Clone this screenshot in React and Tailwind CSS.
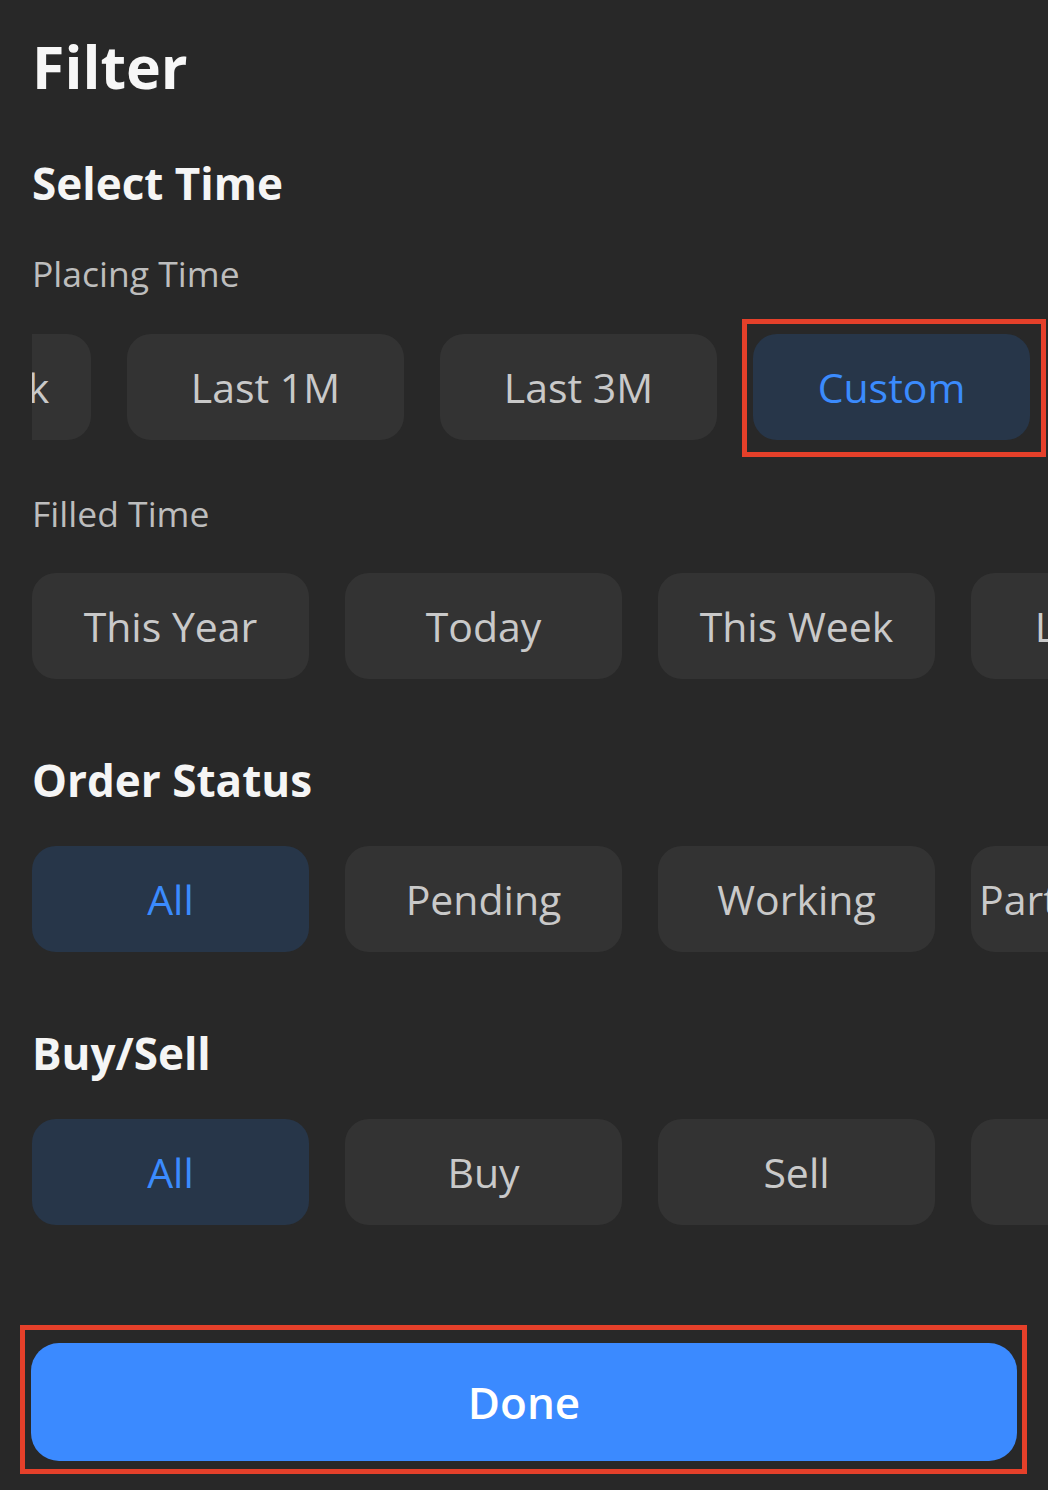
import React from "react";

const FONT = { fontFamily: '"Open Sans", "Noto Sans", Arial, sans-serif' };

function Chip({ label, active = false, marked = false }) {
  return (
    <div
      className={`relative shrink-0 w-[277px] h-[106px] rounded-[24px] flex items-center justify-center px-2 ${
        active ? "bg-[#273649]" : "bg-[#333333]"
      }`}
    >
      <span
        className={`block w-full text-center whitespace-nowrap overflow-hidden text-[41px] leading-[58px] ${
          active ? "text-[#3b8bfd]" : "text-[#c9c9c9]"
        }`}
      >
        {label}
      </span>
      {marked && (
        <span className="pointer-events-none absolute -top-[15px] -left-[11px] -right-[16px] -bottom-[17px] border-[5px] border-[#e5402a]" />
      )}
    </div>
  );
}

function ChipRow({ items, active, marked, offset = "" }) {
  return (
    <div className="overflow-hidden py-[20px] -my-[20px]">
      <div className={`flex gap-[36px] ${offset}`}>
        {items.map((it) => (
          <Chip key={it} label={it} active={it === active} marked={it === marked} />
        ))}
      </div>
    </div>
  );
}

function SectionTitle({ children, className = "" }) {
  return (
    <h2 className={`text-[44px] leading-[44px] font-bold text-[#f5f5f5] ${className}`}>
      {children}
    </h2>
  );
}

function SubLabel({ children, className = "" }) {
  return (
    <div className={`text-[35.5px] leading-[36px] text-[#bdbdbd] ${className}`}>
      {children}
    </div>
  );
}

export default function App() {
  const timeOptions = ["This Year", "Today", "This Week", "Last 1M", "Last 3M", "Custom"];
  return (
    <div
      className="w-[1048px] h-[1490px] bg-[#282828] overflow-hidden flex flex-col"
      style={FONT}
    >
      <div className="pl-[32px] pt-[36px]">
        <h1 className="text-[59px] leading-[60px] font-bold text-[#f7f7f7]">Filter</h1>

        <SectionTitle className="mt-[65px]">Select Time</SectionTitle>

        <SubLabel className="mt-[50px]">Placing Time</SubLabel>
        <div className="mt-[43px]">
          <ChipRow items={timeOptions} active="Custom" marked="Custom" offset="ml-[-844px]" />
        </div>

        <SubLabel className="mt-[55px]">Filled Time</SubLabel>
        <div className="mt-[42px]">
          <ChipRow items={timeOptions} />
        </div>

        <SectionTitle className="mt-[79px]">Order Status</SectionTitle>
        <div className="mt-[44px]">
          <ChipRow items={["All", "Pending", "Working", "Partially Filled", "Filled"]} active="All" />
        </div>

        <SectionTitle className="mt-[79px]">Buy/Sell</SectionTitle>
        <div className="mt-[44px]">
          <ChipRow items={["All", "Buy", "Sell", "Short"]} active="All" />
        </div>
      </div>

      <div className="mt-auto pl-[31px] pr-[31px] pb-[29px]">
        <div className="relative">
          <button className="w-full h-[118px] rounded-[28px] bg-[#3b8aff] text-white text-[44px] font-semibold">
            Done
          </button>
          <span className="pointer-events-none absolute -top-[18px] -left-[11px] -right-[10px] -bottom-[13px] border-[5px] border-[#e5402a]" />
        </div>
      </div>
    </div>
  );
}
